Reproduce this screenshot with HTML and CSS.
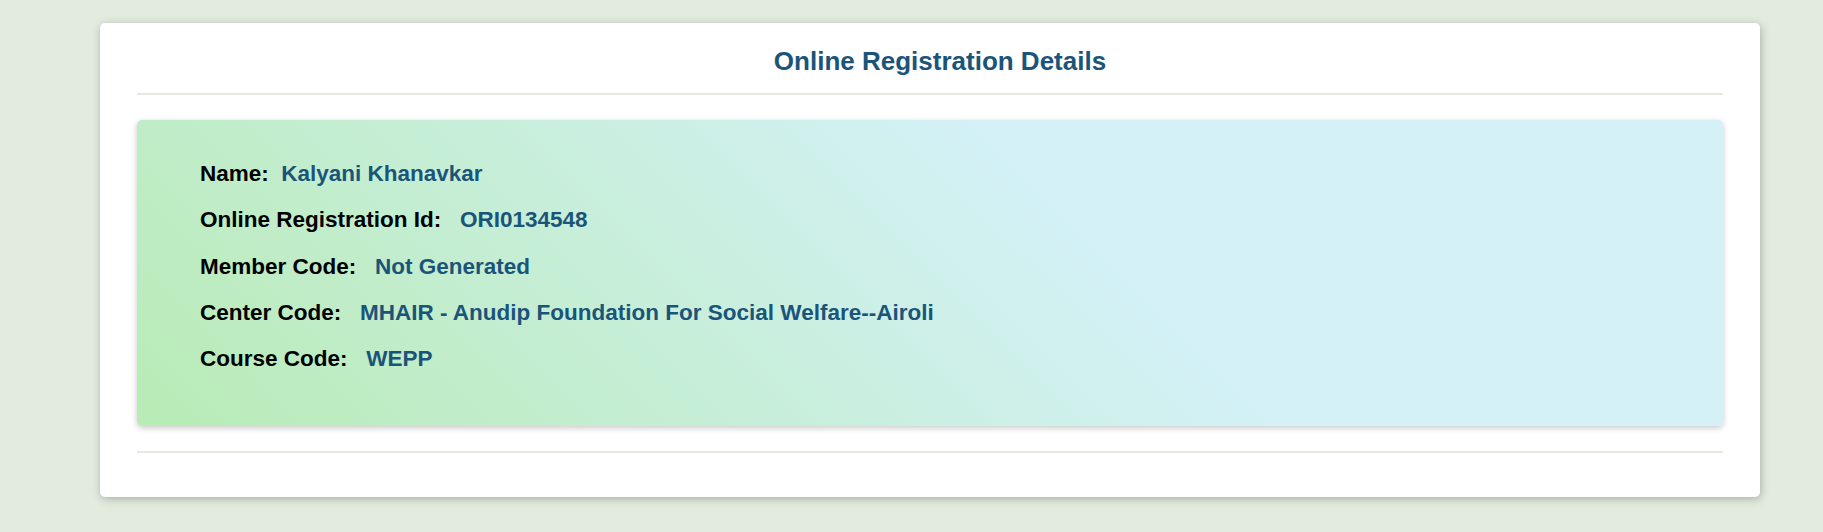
FILE: index.html
```html
<!DOCTYPE html>
<html lang="en">
<head>
<meta charset="utf-8">
<title>Online Registration Details</title>
<link rel="stylesheet" href="styles.css">
</head>
<body>
<div class="card">
  <h3 class="card-title">Online Registration Details</h3>
  <hr class="divider">
  <div class="details">
    <p class="row"><span class="label">Name:</span><span class="value value-tight">Kalyani Khanavkar</span></p>
    <p class="row"><span class="label">Online Registration Id:</span><span class="value">ORI0134548</span></p>
    <p class="row"><span class="label">Member Code:</span><span class="value">Not Generated</span></p>
    <p class="row"><span class="label">Center Code:</span><span class="value">MHAIR - Anudip Foundation For Social Welfare--Airoli</span></p>
    <p class="row"><span class="label">Course Code:</span><span class="value">WEPP</span></p>
  </div>
  <hr class="divider divider-bottom">
</div>
</body>
</html>
```
FILE: styles.css
```css
html, body {
  margin: 0;
  padding: 0;
}
body {
  background: #e3ebdf;
  font-family: "Liberation Sans", Arial, sans-serif;
  padding: 23px 63px 35px 100px;
}
.card {
  background: #ffffff;
  border-radius: 5px;
  box-shadow: 1px 2px 8px rgba(60, 70, 55, 0.35);
  padding: 23px 37px 44px;
}
.card-title {
  margin: 0;
  padding-left: 20px;
  text-align: center;
  font-size: 26px;
  font-weight: bold;
  color: #1b5479;
  line-height: 30px;
}
.divider {
  border: 0;
  height: 2px;
  background: #e4eadd;
  margin: 17px 0 0;
}
.details {
  margin-top: 25px;
  height: 306px;
  box-sizing: border-box;
  border-radius: 5px;
  background: linear-gradient(45deg, #b8ebb5 0%, #d3f1f6 60%, #d3f1f6 100%);
  box-shadow: 0 2px 6px rgba(0, 0, 0, 0.22);
  padding: 39px 63px 0;
  display: flex;
  flex-direction: column;
  gap: 16.3px;
}
.row {
  margin: 0;
  font-size: 22.5px;
  line-height: 30px;
  font-weight: bold;
  color: #000000;
  white-space: nowrap;
}
.value {
  color: #1b5479;
  margin-left: 18.7px;
}
.value-tight {
  margin-left: 12.4px;
}
.divider-bottom {
  margin-top: 25px;
}
```
